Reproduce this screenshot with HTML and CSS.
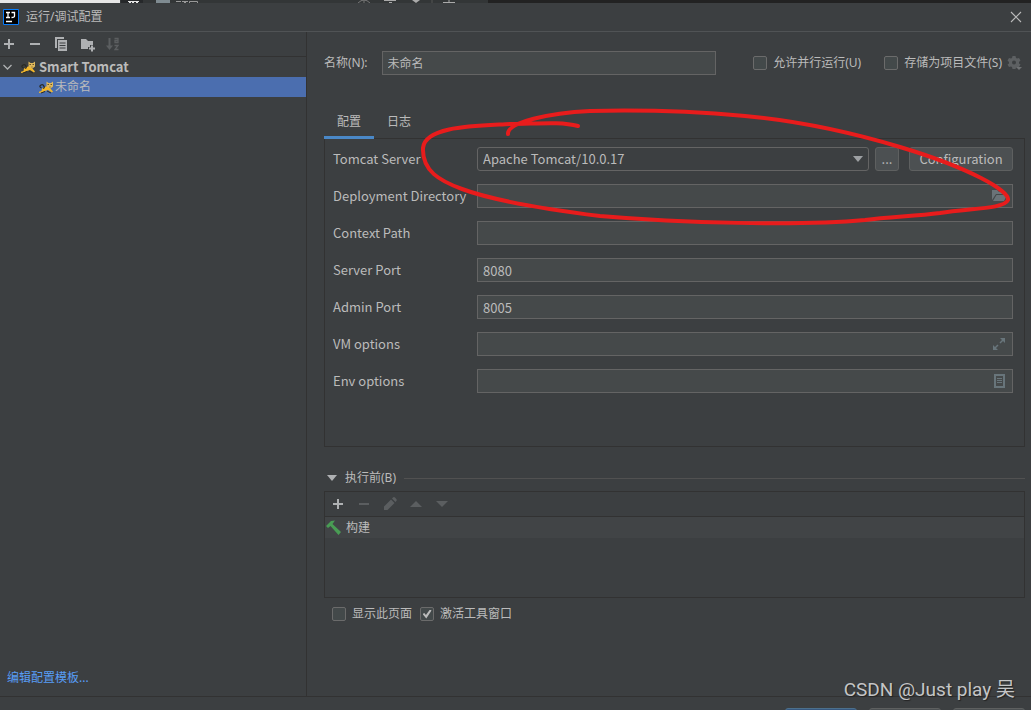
FILE: index.html
```html
<!DOCTYPE html>
<html lang="zh-CN">
<head>
<meta charset="utf-8">
<title>运行/调试配置</title>
<link rel="stylesheet" href="styles.css">
</head>
<body>
<svg class="symbols" aria-hidden="true">
  <symbol id="cat" viewBox="0 0 16 16">
    <path d="M6.500 9Q5.500 4.500 3 6T3.500 9" fill="none" stroke="#2b2b24" stroke-width="1.300"/>
    <path d="M4 9.500L9 7L12 9L15 12.500L14 13.500L10 11L7 12L4 13.500L1 14L1 12.800L3.500 12Z" fill="#f3b72a"/>
    <path d="M5 9.500l2-1M3 14l4-1.500M9 12l4 2" stroke="#2b2b24" stroke-width="1"/>
    <path d="M8.500 2.500L10.500 4H13L15 2.500V7.500L12.500 9.500L9.500 8.500L8.500 6.500Z" fill="#e0b95c"/>
    <path d="M9.500 5.500h1.500M12.500 5.500h1.500M11.500 8h1" stroke="#6b5427" stroke-width="1"/>
  </symbol>
  <symbol id="plus" viewBox="0 0 16 16"><path d="M8 3v10M3 8h10" stroke="currentColor" stroke-width="2"/></symbol>
  <symbol id="minus" viewBox="0 0 16 16"><path d="M3 8h10" stroke="currentColor" stroke-width="2"/></symbol>
</svg>
<div class="window">
  <div class="backdrop">
    <span class="backdrop-tab"></span>
    <svg class="backdrop-icons" width="368" height="3" viewBox="0 0 368 3" aria-hidden="true">
      <path d="M1 0h22v3H1z" fill="#26282a"/><path d="M8 1.500h11M9 2.500h2M12 2.500h2M16 2.500h2" stroke="#e6e6e6"/><path d="M36 0h14v3H36z" fill="#7f8b91"/>
      <path d="M56 1.500h5M62 1.500h6M64 2.500h2M69.500 3V1.500h8V3" fill="none" stroke="#999"/>
      <path d="M238 3q6-6 12 0M244 0v3" fill="none" stroke="#777"/><path d="M264 .5h12M269 2.500h3M323 2.500h12M329 0v3" stroke="#aaa"/><path d="M292 0h8l-4 3z" fill="#aaa"/><path d="M312 0v3" stroke="#555"/>
    </svg>
  </div>
  <header class="titlebar">
    <svg width="16" height="16" viewBox="0 0 16 16" aria-hidden="true"><path d="M.5.5h15v15H.5z" fill="#000" stroke="#087cfa"/><path d="M3 3.500h4M5 3.500v5M3 8.500h4M8.500 3.500h3V7q0 1.500-3 1.500M3 12.500h6" fill="none" stroke="#fff" stroke-width="1.300"/></svg>
    <h1 class="title">运行/调试配置</h1>
    <button class="icon-button close" aria-label="关闭"><svg width="12" height="12" viewBox="0 0 12 12"><path d="M1 1l10 10M11 1L1 11" stroke="#bbb" stroke-width="1.100"/></svg></button>
  </header>
  <div class="content">
    <aside class="sidebar">
      <div class="toolbar">
        <button class="icon-button" aria-label="添加"><svg width="16" height="16"><use href="#plus"/></svg></button>
        <button class="icon-button" aria-label="移除"><svg width="16" height="16"><use href="#minus"/></svg></button>
        <button class="icon-button" aria-label="复制"><svg width="16" height="16" viewBox="0 0 16 16"><path d="M2 1h9v2H4v9H2zM5 4h9v11H5z" fill="#afb1b3"/><path d="M6.500 7h6M6.500 9.500h6M6.500 12h6" stroke="#3c3f41"/></svg></button>
        <button class="icon-button" aria-label="新建文件夹"><svg width="16" height="16" viewBox="0 0 16 16"><path d="M2 3h5l2 2h5v4h-3v2H9v2H2z" fill="#afb1b3"/><path d="M13 9.500v6M10 12.500h6" stroke="#afb1b3" stroke-width="2"/></svg></button>
        <button class="icon-button disabled" aria-label="排序" disabled><svg width="16" height="16" viewBox="0 0 16 16"><path d="M4.500 2v9" stroke="currentColor" stroke-width="2"/><path d="M1 9.500h7L4.500 14z" fill="currentColor"/><path d="M9.500 2.500h3.500v4h-3v-2h3M9.500 9.500H13l-3 4h3.500" fill="none" stroke="currentColor" stroke-width="1.300"/></svg></button>
      </div>
      <ul class="tree">
        <li class="tree-row group">
          <svg width="16" height="16" viewBox="0 0 16 16" aria-hidden="true"><path d="M3.500 6l4 4 4-4" fill="none" stroke="#afb1b3" stroke-width="1.300"/></svg>
          <svg width="16" height="16" aria-hidden="true"><use href="#cat"/></svg><span>Smart Tomcat</span>
        </li>
        <li class="tree-row leaf"><svg width="16" height="16" aria-hidden="true"><use href="#cat"/></svg><span>未命名</span></li>
      </ul>
      <a class="template-link" href="#templates">编辑配置模板...</a>
    </aside>
    <main class="main">
      <div class="name-row">
        <label for="name">名称(N):</label>
        <input class="field name-field" id="name" type="text" value="未命名">
        <div class="name-options">
          <label class="check"><input type="checkbox"><span>允许并行运行(U)</span></label>
          <label class="check"><input type="checkbox"><span>存储为项目文件(S)</span></label>
          <button class="icon-button gear" aria-label="存储选项"><svg width="16" height="16" viewBox="0 0 16 16"><path d="M5.500 1h3l.5 2 1 .6 2-.6 1.500 2.500L12 7v1.500l1.500 1L12 12h-2l-1 .5-.5 1.500h-3L5 12l-1-.5-2 .5L.5 9.500 2 8.500V7L.5 5.500 2 3l2 .6L5 3zM7 5.500a2 2 0 1 0 0 4 2 2 0 0 0 0-4z" fill="#5d6062" fill-rule="evenodd"/><path d="M9 12h6l-3 3z" fill="#6e7173"/></svg></button>
        </div>
      </div>
      <div class="tabs" role="tablist">
        <button class="tab active" role="tab" aria-selected="true">配置</button>
        <button class="tab" role="tab" aria-selected="false">日志</button>
      </div>
      <form class="settings">
        <label for="server">Tomcat Server</label>
        <div class="server-row">
          <div class="select-wrap"><select class="field select" id="server"><option>Apache Tomcat/10.0.17</option></select><svg class="select-arrow" width="10" height="6" viewBox="0 0 10 6" aria-hidden="true"><path d="M0 0h10L5 6z" fill="#9da0a3"/></svg></div>
          <button class="button more" type="button">...</button>
          <button class="button configure" type="button">Configuration</button>
        </div>
        <label for="directory">Deployment Directory</label>
        <div class="input-wrap"><input class="field" id="directory" type="text"><svg class="field-icon" width="16" height="16" viewBox="0 0 16 16" aria-hidden="true"><path d="M1 2h5l2 2h6v2H5l-4 6z" fill="#6a7378"/><path d="M5.500 7H16l-3 6H2z" fill="#6a7378"/></svg></div>
        <label for="context">Context Path</label>
        <input class="field" id="context" type="text">
        <label for="server-port">Server Port</label>
        <input class="field" id="server-port" type="text" value="8080">
        <label for="admin-port">Admin Port</label>
        <input class="field" id="admin-port" type="text" value="8005">
        <label for="vm">VM options</label>
        <div class="input-wrap"><input class="field" id="vm" type="text"><svg class="field-icon" width="16" height="16" viewBox="0 0 16 16" aria-hidden="true"><path d="M9 2h5v5zM2 9v5h5z" fill="#68757b"/><path d="M9 7l3-3M4 12l3-3" stroke="#68757b" stroke-width="1.500"/></svg></div>
        <label for="env">Env options</label>
        <div class="input-wrap"><input class="field" id="env" type="text"><svg class="field-icon" width="16" height="16" viewBox="0 0 16 16" aria-hidden="true"><path d="M4 2h9v12H4z" fill="none" stroke="#68757b" stroke-width="2"/><path d="M6 5.500h5M6 7.500h5M6 9.500h5" stroke="#68757b"/></svg></div>
      </form>
      <section class="before">
        <h2 class="before-title"><svg width="10" height="6" viewBox="0 0 10 6" aria-hidden="true"><path d="M0 0h10L5 6z" fill="#afb1b3"/></svg><span>执行前(B)</span></h2>
        <div class="task-panel">
          <div class="toolbar task-toolbar">
            <button class="icon-button" aria-label="添加任务"><svg width="16" height="16"><use href="#plus"/></svg></button>
            <button class="icon-button disabled" aria-label="移除任务" disabled><svg width="16" height="16"><use href="#minus"/></svg></button>
            <button class="icon-button disabled" aria-label="编辑任务" disabled><svg width="16" height="16" viewBox="0 0 16 16"><path d="M2 14v-3.500L9 3.500 12.500 7 5.500 14zM10 2.500l1-1q1-.8 2 .1l1.300 1.300q1 1 .1 2l-1 1z" fill="currentColor"/></svg></button>
            <button class="icon-button disabled" aria-label="上移" disabled><svg width="16" height="16" viewBox="0 0 16 16"><path d="M2 11h12L8 5z" fill="currentColor"/></svg></button>
            <button class="icon-button disabled" aria-label="下移" disabled><svg width="16" height="16" viewBox="0 0 16 16"><path d="M2 5h12l-6 6z" fill="currentColor"/></svg></button>
          </div>
          <div class="task"><svg width="16" height="16" viewBox="0 0 16 16" aria-hidden="true"><path d="M0 6l5-5 4-.5L6.500 4l8.500 8-2.500 3L4.500 6 2 8z" fill="#499c54"/></svg><span>构建</span></div>
        </div>
        <div class="page-options">
          <label class="check"><input type="checkbox"><span>显示此页面</span></label>
          <label class="check"><input type="checkbox" checked><span>激活工具窗口</span></label>
        </div>
      </section>
      <svg class="marker" viewBox="415 100 600 130" preserveAspectRatio="none" aria-hidden="true"><path d="M578 126C560 121 535 124 510 124C475 126 425 126 423 148C422 171 440 181 462 189C497 202 560 211 600 216C680 223 800 226 865 220C890 217 916 216 940 213C972 208 1004 209 1008 200C1010 191 970 168 900 147C850 132 800 121 745 116C690 111 630 110 590 111C550 113 507 122 508 134"/></svg>
    </main>
  </div>
  <footer class="footer">
    <span class="watermark">CSDN @Just play 吴</span>
    <button class="footer-button primary" aria-label="确定"></button>
    <button class="footer-button" aria-label="取消"></button>
    <button class="footer-button" aria-label="应用"></button>
  </footer>
</div>
</body>
</html>
```

FILE: styles.css
```css
* { box-sizing: border-box; }
body {
  margin: 0;
  background: #3c3f41;
  color: #bbbbbb;
  font: 12px/16px "Noto Sans", "Noto Sans CJK SC", sans-serif;
}
button, input, select { font: inherit; color: inherit; }
svg { display: block; flex: none; }
.symbols { position: absolute; width: 0; height: 0; }
.window { display: flex; flex-direction: column; height: 100vh; overflow: hidden; }

.backdrop { display: flex; flex: none; height: 3px; background: #222222; }
.backdrop-tab { width: 120px; background: #e6e6e6; }
.backdrop-icons { background: #333637; }
.titlebar {
  display: flex;
  flex: none;
  align-items: center;
  gap: 7px;
  height: 29px;
  padding: 0 9px 0 3px;
  border-bottom: 1px solid #505355;
}
.title { margin: 0; font-size: 12px; font-weight: 400; }
.icon-button { display: grid; place-items: center; padding: 0; border: 0; background: none; color: #afb1b3; }
.icon-button.disabled { color: #5b5e60; }
.close { margin-left: auto; }

.content { display: flex; flex: 1; min-height: 0; }
.sidebar { display: flex; flex: none; flex-direction: column; width: 307px; border-right: 1px solid #323232; }
.toolbar { display: flex; flex: none; align-items: center; gap: 10px; height: 25px; padding: 0 1px; border-bottom: 1px solid #323232; }
.tree { margin: 0; padding: 0; list-style: none; }
.tree-row { display: flex; align-items: center; height: 20px; }
.group { gap: 3px; font: 700 13px/18px "Noto Sans CJK SC", sans-serif; }
.group svg + svg { margin-left: 1px; }
.leaf { gap: 1px; padding-left: 38px; background: #4b6eaf; }
.template-link { margin: auto 0 10px 7px; color: #589df6; text-decoration: none; }

.main { position: relative; flex: 1; min-width: 0; padding: 19px 6px 0 17px; }
.name-row { display: flex; align-items: center; }
.name-options { display: flex; align-items: center; margin-left: auto; }
.name-options .check + .check { margin-left: 23px; }
.gear { margin: 0 2px 0 5px; }
.field {
  width: 100%;
  height: 24px;
  padding: 0 5px;
  border: 1px solid #646464;
  border-radius: 0;
  background: #45494a;
  outline: 0;
}
.name-row .name-field { flex: none; width: 334px; margin-left: 14px; }
.check { display: flex; align-items: center; gap: 6px; }
.check input {
  display: grid;
  place-items: center;
  appearance: none;
  width: 14px;
  height: 14px;
  margin: 0;
  border: 1px solid #6b6b6b;
  border-radius: 2px;
  background: #43494a;
}
.check input:checked::after {
  content: "";
  width: 9px;
  height: 9px;
  background: #bbbbbb;
  clip-path: polygon(0 50%, 20% 38%, 38% 62%, 82% 0, 100% 12%, 42% 100%);
}

.tabs { display: flex; margin-top: 29px; }
.tab { height: 35px; padding: 3px 13px 0; border: 0; border-bottom: 3px solid transparent; background: none; }
.tab.active { border-color: #4a88c7; }
.settings {
  display: grid;
  grid-template-columns: 144px 1fr;
  grid-auto-rows: 24px;
  align-items: center;
  row-gap: 13px;
  height: 309px;
  margin-top: -1px;
  padding: 8px 11px 0 8px;
  border: 1px solid #323232;
  font: 13px/18px "Noto Sans CJK SC", sans-serif;
}
.server-row { display: flex; gap: 6px; }
.select-wrap, .input-wrap { position: relative; flex: 1; }
.select { display: block; appearance: none; border-radius: 3px; background: #3c3f41; }
.select-arrow { position: absolute; top: 9px; right: 6px; }
.input-wrap .field { display: block; padding-right: 24px; }
.field-icon { position: absolute; top: 4px; right: 6px; }
.button { height: 24px; padding: 0; border: 1px solid #5e6060; border-radius: 3px; background: #4c5052; }
.more { width: 24px; margin-right: 4px; }
.configure { width: 104px; }

.before-title { display: flex; align-items: center; gap: 8px; margin: 23px 0 5px; padding-left: 3px; font-size: 12px; font-weight: 400; }
.before-title::after { content: ""; flex: 1; height: 1px; background: #515151; }
.task-panel { height: 107px; border: 1px solid #323232; }
.task-toolbar { padding-left: 5px; }
.task { display: flex; align-items: center; gap: 4px; height: 21px; padding-left: 1px; background: #414446; }
.page-options { display: flex; gap: 8px; margin-top: 8px; padding-left: 8px; }
.marker { position: absolute; top: 68px; right: 16px; left: 108px; width: calc(100% - 124px); height: 130px; pointer-events: none; }
.marker path { fill: none; stroke: #e81c1c; stroke-width: 4; stroke-linecap: round; vector-effect: non-scaling-stroke; }

.footer {
  position: relative;
  display: flex;
  flex: none;
  justify-content: flex-end;
  gap: 12px;
  height: 14px;
  padding: 11px 6px 0;
  border-top: 1px solid #323232;
}
.footer-button { width: 72px; height: 24px; padding: 0; border: 1px solid #5e6060; border-radius: 3px; background: #4c5052; }
.primary { border-color: #4c708c; background: #365880; }
.watermark {
  position: absolute;
  right: 16px;
  bottom: 8px;
  color: #c4c5c6;
  font: 19px/24px Roboto, "Noto Sans CJK SC", sans-serif;
  text-shadow: 1px 1px 1px #222222;
}
```
